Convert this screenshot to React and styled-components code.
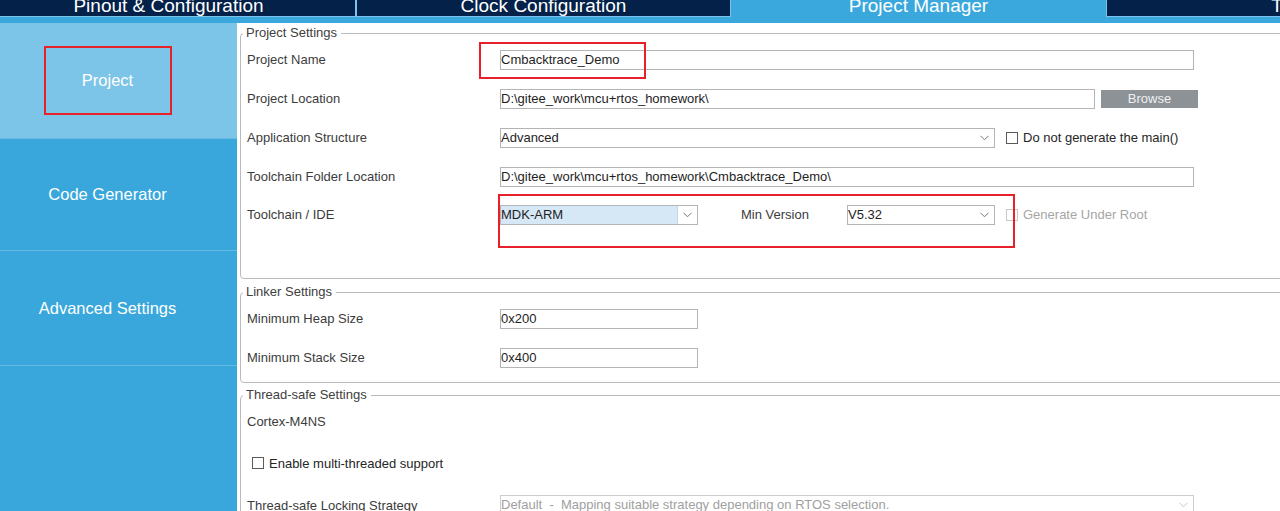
import styled, { createGlobalStyle } from 'styled-components';

const GlobalStyle = createGlobalStyle`
  html, body {
    margin: 0;
    padding: 0;
    background: #fff;
    overflow: hidden;
  }
  body {
    font-family: 'Liberation Sans', Arial, sans-serif;
  }
`;

const Page = styled.div`
  display: flex;
  flex-direction: column;
  width: 1280px;
  height: 511px;
  overflow: hidden;
`;

const TabBar = styled.div`
  display: flex;
  align-items: flex-start;
  height: 23px;
  flex-shrink: 0;
  margin-left: -19px;
  background: #3aa8dc;
`;

const Tab = styled.div`
  width: 373px;
  height: 16px;
  flex-shrink: 0;
  background: ${(p) => (p.$active ? '#3aa8dc' : '#032149')};
  border: 1px solid ${(p) => (p.$active ? '#3aa8dc' : '#7cc3ea')};
  border-top: none;
  color: #fff;
  font-size: 19px;
  line-height: 11px;
  text-align: center;
  white-space: nowrap;
  overflow: hidden;
`;

const Body = styled.div`
  flex: 1;
  min-height: 0;
  display: grid;
  grid-template-columns: 237px 1fr;
`;

const Sidebar = styled.nav`
  background: #39a7db;
  display: flex;
  flex-direction: column;
`;

const SideItem = styled.div`
  height: ${(p) => p.$h || 115}px;
  flex-shrink: 0;
  display: flex;
  align-items: center;
  justify-content: center;
  padding-right: 22px;
  background: ${(p) => (p.$active ? '#7dc5e8' : 'transparent')};
  border-bottom: 1px solid #66bbe5;
  color: #fff;
  font-size: 16.5px;
`;

const Marked = styled.span`
  display: flex;
  align-items: center;
  justify-content: center;
  width: 128px;
  height: 69px;
  box-sizing: border-box;
  border: 2px solid #e8202a;
`;

const Content = styled.main`
  padding: 3px 0 0 3px;
  overflow: hidden;
  background: #fff;
`;

const Group = styled.fieldset`
  margin: ${(p) => p.$top || 0}px -30px 0 0;
  padding: 0 0 ${(p) => p.$bottom || 0}px 6px;
  border: 1px solid #b9bdc1;
  border-radius: 4px;
  min-width: 0;
`;

const Legend = styled.legend`
  padding: 0 4px 0 3px;
  margin-left: -4px;
  font-size: 13px;
  line-height: 14px;
  color: #404040;
`;

const Row = styled.div`
  display: flex;
  align-items: center;
  height: ${(p) => p.$h || 39}px;
`;

const Label = styled.span`
  width: ${(p) => p.$w || 253}px;
  flex-shrink: 0;
  font-size: 13px;
  color: ${(p) => (p.$muted ? '#a6a6a6' : '#3c3c3c')};
`;

const Field = styled.div`
  position: relative;
  display: flex;
  align-items: center;
`;

const Mark = styled.div`
  position: absolute;
  left: ${(p) => p.$x}px;
  top: ${(p) => p.$y}px;
  width: ${(p) => p.$w}px;
  height: ${(p) => p.$h}px;
  box-sizing: border-box;
  border: 2px solid #e8202a;
  pointer-events: none;
`;

const TextBox = styled.input`
  width: ${(p) => p.$w}px;
  height: 20px;
  box-sizing: border-box;
  margin: 0;
  padding: 0;
  border: 1px solid #b4b4b4;
  font-family: 'Liberation Sans', Arial, sans-serif;
  font-size: 13px;
  color: #1e1e1e;
  outline: none;
  background: #fff;
`;

const Button = styled.button`
  width: 97px;
  height: 18px;
  margin-left: 6px;
  padding: 0;
  border: none;
  background: #8d9297;
  color: #eef0f2;
  font-family: 'Liberation Sans', Arial, sans-serif;
  font-size: 13px;
`;

const SelectBox = styled.div`
  width: ${(p) => p.$w}px;
  height: 20px;
  box-sizing: border-box;
  display: flex;
  border: 1px solid ${(p) => (p.$disabled ? '#cdcdcd' : '#b4b4b4')};
  background: #fff;
`;

const SelectValue = styled.span`
  flex: 1;
  font-size: 13px;
  line-height: 18px;
  white-space: pre;
  overflow: hidden;
  color: ${(p) => (p.$disabled ? '#a0a0a0' : '#1e1e1e')};
  background: ${(p) => p.$bg || 'transparent'};
`;

const Arrow = styled.span`
  width: 19px;
  display: flex;
  align-items: center;
  justify-content: center;
  ${(p) => p.$split && 'border-left: 1px solid #c9d4dd;'}
`;

const Check = styled.span`
  width: 12px;
  height: 12px;
  box-sizing: border-box;
  flex-shrink: 0;
  margin: 0 5px 0 ${(p) => p.$ml || 0}px;
  border: 1px solid ${(p) => (p.$disabled ? '#c8c8c8' : '#5a5a5a')};
  background: #fff;
`;

const CheckText = styled.span`
  font-size: 13px;
  color: ${(p) => (p.$disabled ? '#a6a6a6' : '#262626')};
  white-space: nowrap;
`;

function Chevron({ color = '#777' }) {
  return (
    <svg width='9' height='6' viewBox='0 0 9 6'>
      <polyline points='0.5,0.8 4.5,4.8 8.5,0.8' fill='none' stroke={color} strokeWidth='1' />
    </svg>
  );
}

function Select({ width, value, bg, split, disabled }) {
  return (
    <SelectBox $w={width} $disabled={disabled}>
      <SelectValue $bg={bg} $disabled={disabled}>
        {value}
      </SelectValue>
      <Arrow $split={split}>
        <Chevron color={disabled ? '#c4c4c4' : '#777'} />
      </Arrow>
    </SelectBox>
  );
}

function App() {
  return (
    <Page>
      <GlobalStyle />
      <TabBar>
        <Tab>Pinout &amp; Configuration</Tab>
        <Tab>Clock Configuration</Tab>
        <Tab $active>Project Manager</Tab>
        <Tab>Tools</Tab>
      </TabBar>
      <Body>
        <Sidebar>
          <SideItem $active>
            <Marked>Project</Marked>
          </SideItem>
          <SideItem $h={111}>Code Generator</SideItem>
          <SideItem $h={114}>Advanced Settings</SideItem>
        </Sidebar>
        <Content>
          <Group $bottom={45}>
            <Legend>Project Settings</Legend>
            <Row>
              <Label>Project Name</Label>
              <Field>
                <TextBox $w={694} defaultValue='Cmbacktrace_Demo' readOnly />
                <Mark $x={-21} $y={-8} $w={167} $h={37} />
              </Field>
            </Row>
            <Row>
              <Label>Project Location</Label>
              <Field>
                <TextBox $w={595} defaultValue='D:\gitee_work\mcu+rtos_homework\' readOnly />
                <Button type='button'>Browse</Button>
              </Field>
            </Row>
            <Row>
              <Label>Application Structure</Label>
              <Field>
                <Select width={495} value='Advanced' />
                <Check $ml={11} />
                <CheckText>Do not generate the main()</CheckText>
              </Field>
            </Row>
            <Row>
              <Label>Toolchain Folder Location</Label>
              <Field>
                <TextBox
                  $w={694}
                  defaultValue='D:\gitee_work\mcu+rtos_homework\Cmbacktrace_Demo\'
                  readOnly
                />
              </Field>
            </Row>
            <Row $h={37}>
              <Label>Toolchain / IDE</Label>
              <Field>
                <Select width={198} value='MDK-ARM' bg='#d6e7f6' split />
                <Label $w={106} style={{ marginLeft: 43 }}>
                  Min Version
                </Label>
                <Select width={148} value='V5.32' />
                <Check $ml={11} $disabled />
                <CheckText $disabled>Generate Under Root</CheckText>
                <Mark $x={-2} $y={-11} $w={517} $h={54} />
              </Field>
            </Row>
          </Group>

          <Group $top={6} $bottom={5}>
            <Legend>Linker Settings</Legend>
            <Row>
              <Label>Minimum Heap Size</Label>
              <TextBox $w={198} defaultValue='0x200' readOnly />
            </Row>
            <Row>
              <Label>Minimum Stack Size</Label>
              <TextBox $w={198} defaultValue='0x400' readOnly />
            </Row>
          </Group>

          <Group $top={5} $bottom={20}>
            <Legend>Thread-safe Settings</Legend>
            <Row $h={38}>
              <Label>Cortex-M4NS</Label>
            </Row>
            <Row $h={46}>
              <Check $ml={5} />
              <CheckText>Enable multi-threaded support</CheckText>
            </Row>
            <Row $h={38}>
              <Label>Thread-safe Locking Strategy</Label>
              <Select
                width={694}
                value='Default  -  Mapping suitable strategy depending on RTOS selection.'
                disabled
              />
            </Row>
          </Group>
        </Content>
      </Body>
    </Page>
  );
}

export default App;
